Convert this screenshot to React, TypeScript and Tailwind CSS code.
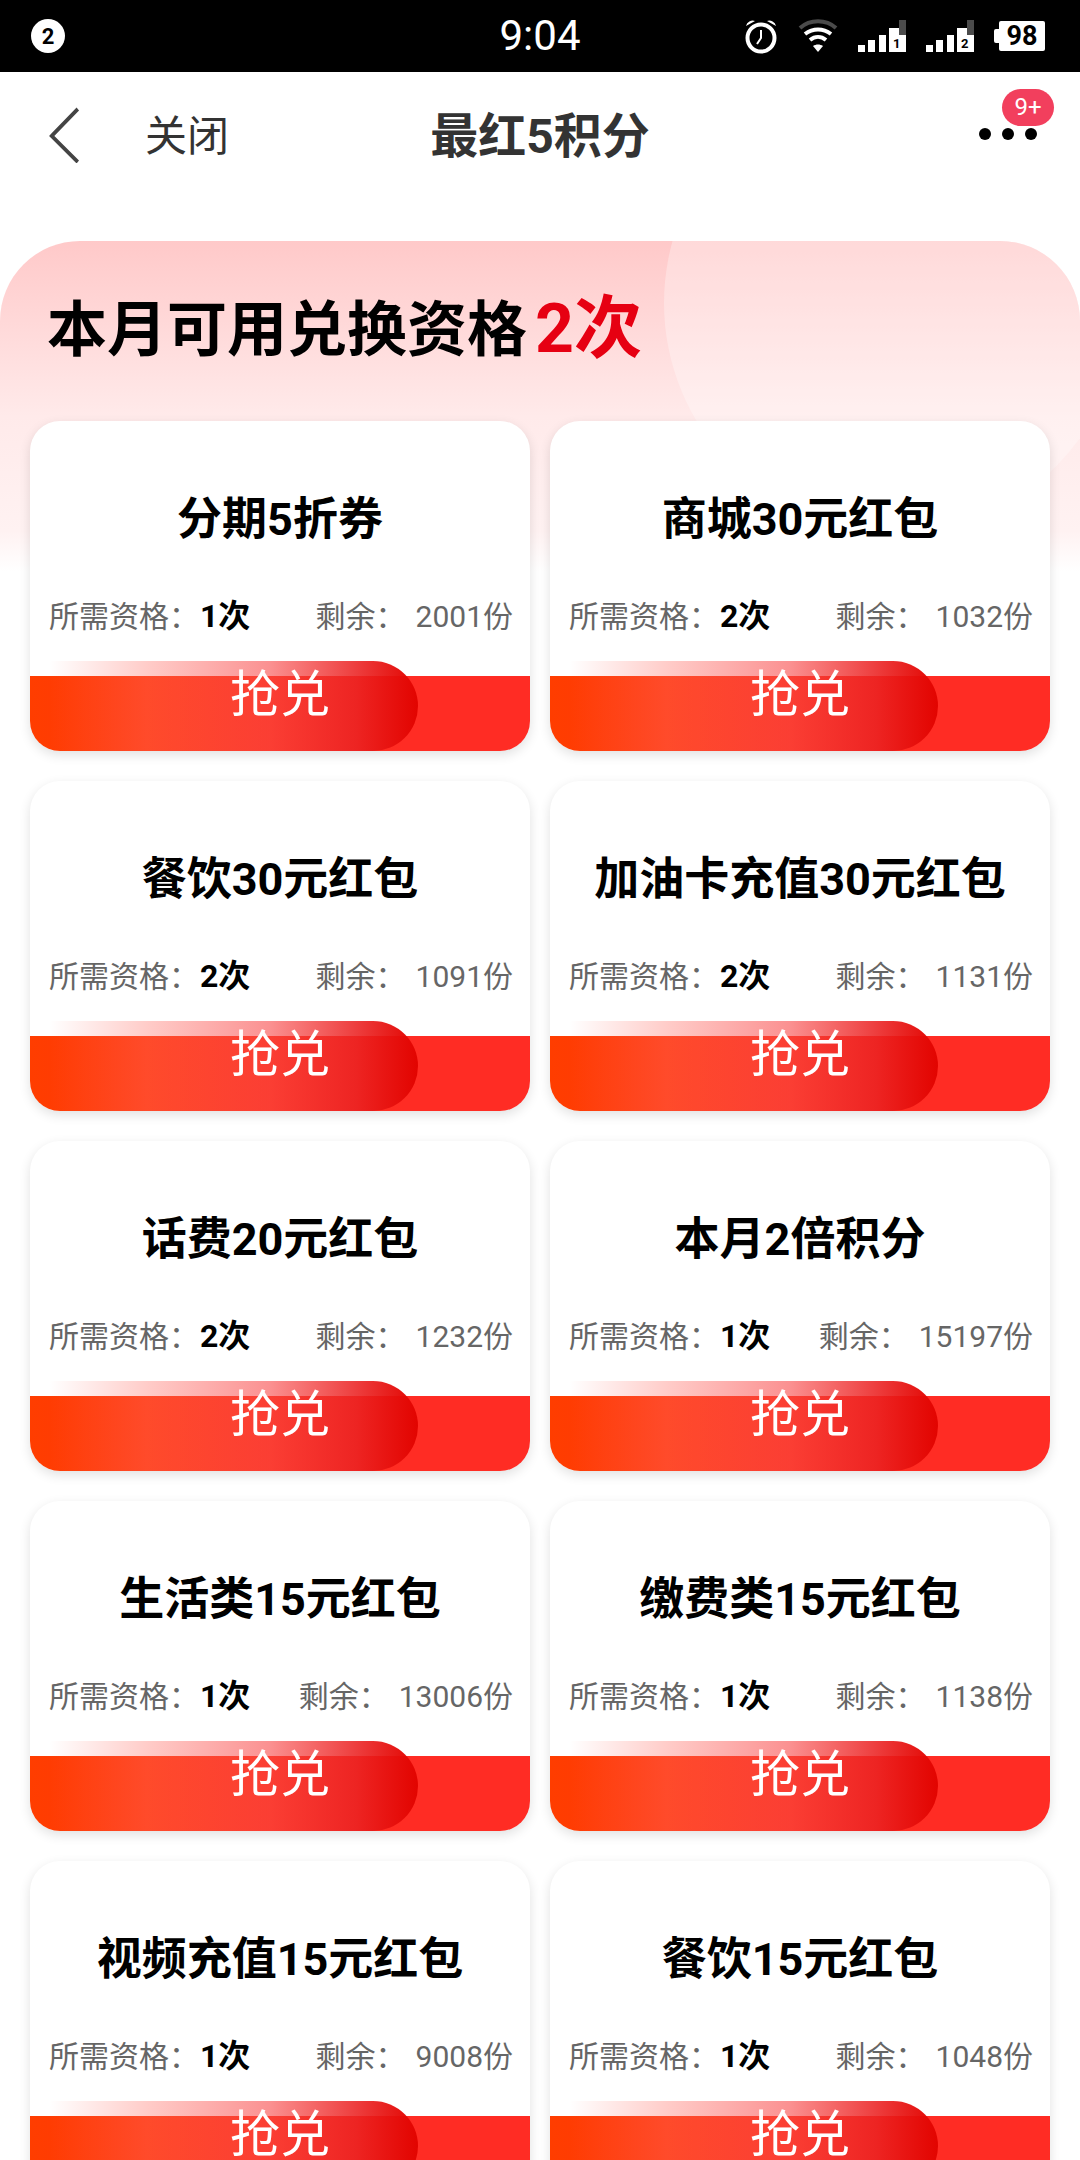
import React from 'react';

const FONT = "font-['Roboto','Noto_Sans_CJK_SC',sans-serif]";

type Coupon = { name: string; need: number; left: number };

const coupons: Coupon[] = [
  { name: '分期5折券', need: 1, left: 2001 },
  { name: '商城30元红包', need: 2, left: 1032 },
  { name: '餐饮30元红包', need: 2, left: 1091 },
  { name: '加油卡充值30元红包', need: 2, left: 1131 },
  { name: '话费20元红包', need: 2, left: 1232 },
  { name: '本月2倍积分', need: 1, left: 15197 },
  { name: '生活类15元红包', need: 1, left: 13006 },
  { name: '缴费类15元红包', need: 1, left: 1138 },
  { name: '视频充值15元红包', need: 1, left: 9008 },
  { name: '餐饮15元红包', need: 1, left: 1048 },
];

const Signal = ({ sim }: { sim: string }) => (
  <span className="relative block w-[48px] h-[32px]">
    <svg viewBox="0 0 48 32" className="absolute inset-0 w-[48px] h-[32px]">
      <rect x="0" y="25" width="7" height="7" fill="#fff" />
      <rect x="10" y="20" width="7" height="12" fill="#fff" />
      <rect x="21" y="15" width="7" height="17" fill="#fff" />
      <rect x="31" y="8" width="17" height="24" fill="#fff" />
      <rect x="41" y="0" width="7" height="15" fill="#4b4b4b" />
    </svg>
    <span className="absolute left-[35px] bottom-[1px] text-[13px] leading-[14px] font-bold text-black">{sim}</span>
  </span>
);

const StatusBar = () => (
  <div className="h-[72px] bg-black flex items-center pl-[31px] pr-[35px] relative">
    <span className="w-[34px] h-[34px] rounded-full bg-white text-black text-[22px] font-bold flex items-center justify-center">2</span>
    <span className="absolute left-0 right-0 text-center text-white text-[42px] leading-[72px]">9:04</span>
    <div className="ml-auto flex items-center gap-[20px]">
      <svg viewBox="0 0 34 36" className="w-[34px] h-[36px]" fill="none">
        <circle cx="17" cy="20" r="13.5" stroke="#fff" strokeWidth="4" />
        <path d="M17 12v8l-4 6" stroke="#fff" strokeWidth="2" />
        <path d="M2 8a7 7 0 0 1 9-5zM32 8a7 7 0 0 0-9-5z" fill="#fff" />
      </svg>
      <svg viewBox="0 0 40 34" className="w-[40px] h-[34px]" fill="none">
        <path d="M2 9C12 0 28 0 38 9" stroke="#4b4b4b" strokeWidth="4" />
        <path d="M7 15c8-6 18-6 26 0M12 21c5-4 11-4 16 0" stroke="#fff" strokeWidth="4" />
        <path d="M15 27c3-2 7-2 10 0l-5 6z" fill="#fff" />
      </svg>
      <Signal sim="1" />
      <Signal sim="2" />
      <span className="flex items-center">
        <span className="w-[5px] h-[14px] bg-white rounded-l-[2px]" />
        <span className="w-[46px] h-[30px] bg-white rounded-[2px] text-black text-[27px] font-bold leading-[30px] text-center">98</span>
      </span>
    </div>
  </div>
);

const TitleBar = () => (
  <div className="h-[103px] bg-white flex items-center relative">
    <svg viewBox="0 0 34 56" className="absolute left-[49px] top-[35px] w-[34px] h-[56px]" fill="none">
      <path d="M32 2 4 28l-1 1 29 26" stroke="#444" strokeWidth="4" transform="scale(0.9 1)" />
    </svg>
    <span className="absolute left-[145px] top-[37px] text-[42px] leading-[56px] text-[#333]">关闭</span>
    <span className="absolute left-0 right-0 top-[35px] text-center text-[48px] leading-[60px] font-bold text-[#333]">最红5积分</span>
    <div className="absolute left-[979px] top-[56px] flex gap-[11px]">
      <span className="w-[12px] h-[12px] rounded-full bg-black" />
      <span className="w-[12px] h-[12px] rounded-full bg-black" />
      <span className="w-[12px] h-[12px] rounded-full bg-black" />
    </div>
    <span className="absolute left-[1002px] top-[17px] w-[52px] h-[37px] rounded-full bg-[#f23f5d] text-white text-[24px] leading-[37px] text-center">9+</span>
  </div>
);

const CouponCard = ({ coupon }: { coupon: Coupon }) => (
  <div className="h-[330px] bg-white rounded-[30px] shadow-[0_4px_12px_rgba(0,0,0,0.12)] overflow-hidden flex flex-col">
    <div className="h-[125px] pt-[73px] text-center text-[45px] leading-[52px] font-bold text-black">{coupon.name}</div>
    <div className="mt-[45px] h-[50px] pl-[19px] pr-[17px] flex items-center text-[30px] text-[#666]">
      <span>所需资格：</span>
      <span className="ml-[1px] text-[32px] font-bold text-black">{coupon.need}次</span>
      <span className="ml-auto">剩余：</span>
      <span className="ml-[10px]">{coupon.left}份</span>
    </div>
    <div className="mt-auto relative h-[90px]">
      <div className="absolute left-0 right-0 bottom-0 h-[75px] bg-[linear-gradient(90deg,#ff3d00,#ff2c24_75%)]" />
      {/* pill fades in from nothing on the left, solid red at its round end */}
      <div className="absolute left-0 top-0 w-[388px] h-[90px] rounded-r-[45px] bg-[linear-gradient(90deg,rgba(255,120,110,0)_5%,rgba(255,110,100,0.35)_30%,rgba(248,70,70,0.6)_62%,rgba(235,35,35,0.88)_84%,rgba(226,4,0,1)_100%)]" />
      <div className="absolute inset-0 text-center text-white text-[50px] leading-[69px]">抢兑</div>
    </div>
  </div>
);

export default function App() {
  return (
    <div className={`${FONT} w-[1080px] h-[2160px] overflow-hidden bg-white`}>
      <StatusBar />
      <TitleBar />
      <div className="mt-[66px] relative rounded-t-[80px] h-[1919px] overflow-hidden bg-[linear-gradient(180deg,#ffc9c9_0,#ffeaea_175px,#fff2f2_290px,#ffffff_330px)]">
        <div className="absolute left-[664px] top-[-168px] w-[460px] h-[460px] rounded-full bg-white/30" />
        <div className="relative pl-[47px] pt-[50px] h-[180px] flex items-start text-[60px] leading-[80px] font-bold text-black">
          本月可用兑换资格
          <span className="ml-[8px] text-[#e60012] text-[68px] leading-[76px]">2次</span>
        </div>
        <div className="relative px-[30px] grid grid-cols-2 gap-x-[20px] gap-y-[30px]">
          {coupons.map((c) => (
            <CouponCard key={c.name} coupon={c} />
          ))}
        </div>
      </div>
    </div>
  );
}
